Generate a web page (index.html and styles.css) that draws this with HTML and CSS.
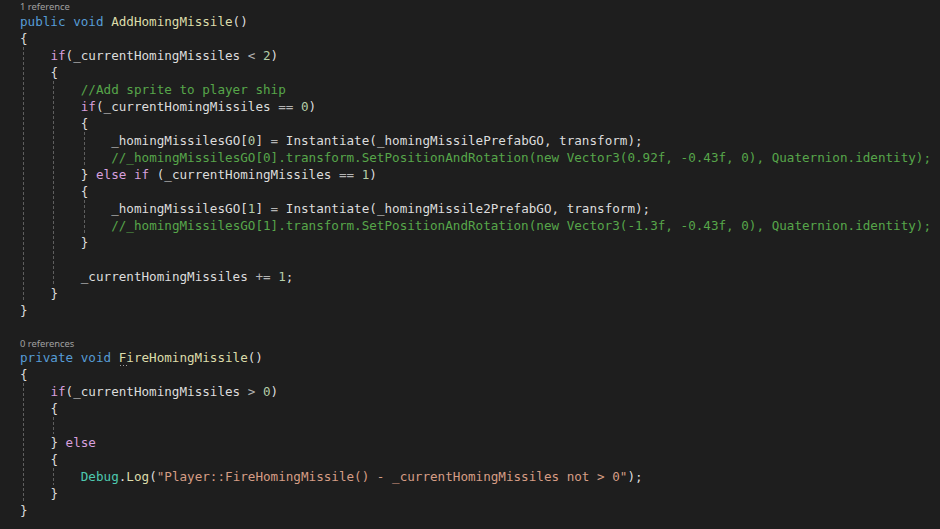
FILE: index.html
```html
<!DOCTYPE html>
<html>
<head>
<meta charset="utf-8">
<link rel="stylesheet" href="styles.css">
</head>
<body>
<div class="editor">
  <div class="lens">1 reference</div>
  <div class="ln"><span class="kw">public</span> <span class="kw">void</span> <span class="fn">AddHomingMissile</span>()</div>
  <div class="ln">{</div>
  <div class="blk">
    <div class="ln"><span class="ctl">if</span>(_currentHomingMissiles <span class="op">&lt;</span> <span class="num">2</span>)</div>
    <div class="ln">{</div>
    <div class="blk">
      <div class="ln"><span class="cm">//Add sprite to player ship</span></div>
      <div class="ln"><span class="ctl">if</span>(_currentHomingMissiles <span class="op">==</span> <span class="num">0</span>)</div>
      <div class="ln">{</div>
      <div class="blk">
        <div class="ln">_homingMissilesGO[<span class="num">0</span>] <span class="op">=</span> Instantiate(_homingMissilePrefabGO, transform);</div>
        <div class="ln"><span class="cm">//_homingMissilesGO[0].transform.SetPositionAndRotation(new Vector3(0.92f, -0.43f, 0), Quaternion.identity);</span></div>
      </div>
      <div class="ln">} <span class="ctl">else</span> <span class="ctl">if</span> (_currentHomingMissiles <span class="op">==</span> <span class="num">1</span>)</div>
      <div class="ln">{</div>
      <div class="blk">
        <div class="ln">_homingMissilesGO[<span class="num">1</span>] <span class="op">=</span> Instantiate(_homingMissile2PrefabGO, transform);</div>
        <div class="ln"><span class="cm">//_homingMissilesGO[1].transform.SetPositionAndRotation(new Vector3(-1.3f, -0.43f, 0), Quaternion.identity);</span></div>
      </div>
      <div class="ln">}</div>
      <div class="ln"> </div>
      <div class="ln">_currentHomingMissiles <span class="op">+=</span> <span class="num">1</span>;</div>
    </div>
    <div class="ln">}</div>
  </div>
  <div class="ln">}</div>
  <div class="ln"> </div>
  <div class="lens second">0 references</div>
  <div class="ln"><span class="kw">private</span> <span class="kw">void</span> <span class="fn"><span class="hint">F</span>ireHomingMissile</span>()</div>
  <div class="ln">{</div>
  <div class="blk">
    <div class="ln"><span class="ctl">if</span>(_currentHomingMissiles <span class="op">&gt;</span> <span class="num">0</span>)</div>
    <div class="ln">{</div>
    <div class="blk">
      <div class="ln"> </div>
    </div>
    <div class="ln">} <span class="ctl">else</span></div>
    <div class="ln">{</div>
    <div class="blk">
      <div class="ln"><span class="ty">Debug</span>.<span class="fn">Log</span>(<span class="str">"Player::FireHomingMissile() - _currentHomingMissiles not &gt; 0"</span>);</div>
    </div>
    <div class="ln">}</div>
  </div>
  <div class="ln">}</div>
</div>
</body>
</html>
```
FILE: styles.css
```css
html, body {
  margin: 0;
  padding: 0;
  background: #1e1e1e;
  overflow: hidden;
}
.editor {
  padding-left: 20px;
  width: 940px;
  box-sizing: border-box;
  font-family: "DejaVu Sans Mono", "Liberation Mono", monospace;
  font-size: 12.62px;
  color: #dcdcdc;
}
.lens {
  font-family: "Noto Sans", "Open Sans", sans-serif;
  font-size: 9.4px;
  height: 13px;
  line-height: 13px;
  color: #a0a0a0;
}
.lens.second {
  padding-top: 1px;
  height: 12px;
}
.ln {
  height: 17px;
  line-height: 17px;
  white-space: pre;
}
.blk {
  padding-left: 30.4px;
  background-image: repeating-linear-gradient(to bottom, #5e5e5e 0 3px, transparent 3px 5px);
  background-size: 1px 100%;
  background-position: 3px 0;
  background-repeat: no-repeat;
}
.kw { color: #569cd6; }
.fn { color: #dcdcaa; }
.ctl { color: #d8a0df; }
.cm { color: #57a64a; }
.num { color: #b5cea8; }
.op { color: #b4b4b4; }
.str { color: #d69d85; }
.ty { color: #4ec9b0; }
.hint {
  position: relative;
}
.hint::after {
  content: "";
  position: absolute;
  left: 1px;
  top: 15px;
  width: 7px;
  height: 1px;
  background-image: repeating-linear-gradient(to right, #a0a0a0 0 1px, transparent 1px 3px);
}
```
